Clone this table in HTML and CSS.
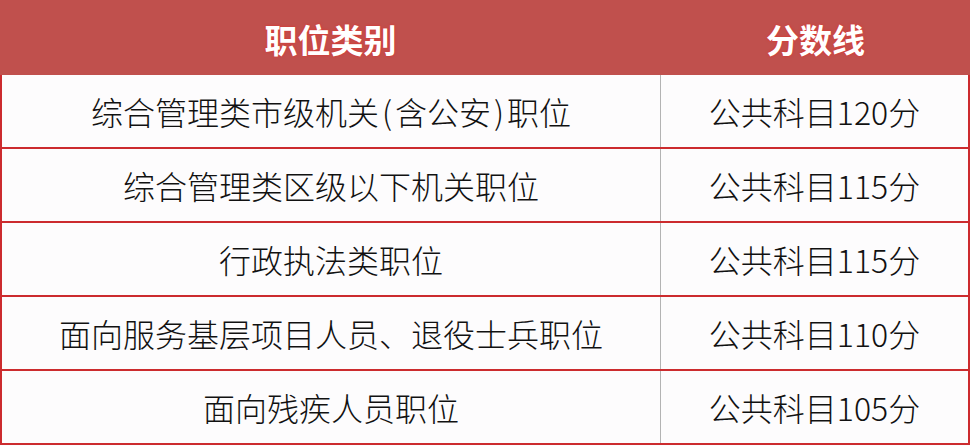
FILE: index.html
```html
<!DOCTYPE html>
<html lang="zh-CN">
<head>
<meta charset="utf-8">
<title>职位类别 分数线</title>
<link rel="stylesheet" href="styles.css">
</head>
<body>
<div class="table">
  <div class="row head">
    <div class="cell">职位类别</div>
    <div class="cell">分数线</div>
  </div>
  <div class="row">
    <div class="cell cat">综合管理类市级机关<span class="paren">(</span>含公安<span class="paren">)</span>职位</div>
    <div class="cell">公共科目120分</div>
  </div>
  <div class="row">
    <div class="cell cat">综合管理类区级以下机关职位</div>
    <div class="cell">公共科目115分</div>
  </div>
  <div class="row">
    <div class="cell cat">行政执法类职位</div>
    <div class="cell">公共科目115分</div>
  </div>
  <div class="row">
    <div class="cell cat">面向服务基层项目人员、退役士兵职位</div>
    <div class="cell">公共科目110分</div>
  </div>
  <div class="row">
    <div class="cell cat">面向残疾人员职位</div>
    <div class="cell">公共科目105分</div>
  </div>
</div>
</body>
</html>
```
FILE: styles.css
```css
html, body {
  margin: 0;
  padding: 0;
  background: #fdfcfd;
}
.table {
  width: 970px;
  font-family: "Noto Sans CJK SC", "Liberation Sans", sans-serif;
  color: #111;
}
.row {
  display: grid;
  grid-template-columns: 659px 307px;
  height: 72px;
  border-left: 2px solid #cc2b2e;
  border-right: 2px solid #cc2b2e;
  border-bottom: 2px solid #cc2b2e;
}
.row.head {
  height: 75px;
  background: #c0504d;
  border: none;
  grid-template-columns: 661px 309px;
}
.cell {
  display: flex;
  align-items: center;
  justify-content: center;
  font-size: 32px;
  font-weight: 300;
  white-space: nowrap;
}
.paren {
  display: inline-block;
  width: 16px;
  text-align: center;
}
.cell.cat {
  border-right: 1px solid #b3b3b3;
}
.head .cell {
  color: #fff;
  font-weight: 700;
  font-size: 33px;
  text-shadow: 0 0 3px #e0302c;
  padding-top: 2px;
}
```
